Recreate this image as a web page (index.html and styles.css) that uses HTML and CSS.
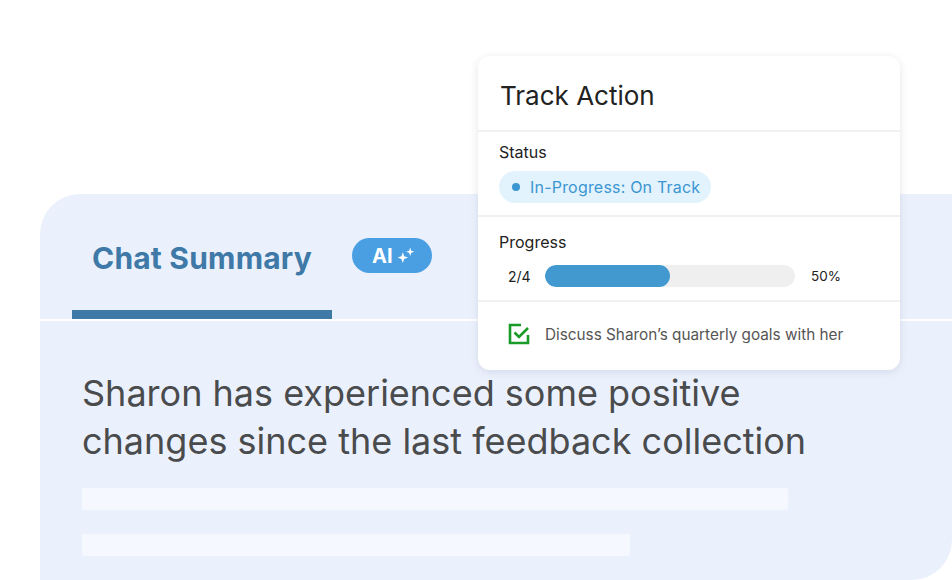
FILE: index.html
```html
<!DOCTYPE html>
<html>
<head>
    <title>Chat Summary</title>
    <link rel="stylesheet" href="styles.css">
</head>
<body>

<div class="panel">
    <div class="tabs">
        <div class="tab active">Chat Summary</div>
        <span class="ai-badge">AI
            <svg width="19" height="19" viewBox="0 0 18 18">
                <path d="M5.5 6 L6.8 9.7 L10.5 11 L6.8 12.3 L5.5 16 L4.2 12.3 L0.5 11 L4.2 9.7 Z" fill="#fff"/>
                <path d="M12.5 1.5 L13.5 4.5 L16.5 5.5 L13.5 6.5 L12.5 9.5 L11.5 6.5 L8.5 5.5 L11.5 4.5 Z" fill="#fff"/>
            </svg>
        </span>
    </div>

    <div class="summary">
        <p class="summary-text">Sharon has experienced some positive changes since the last feedback collection</p>
        <div class="skeleton long"></div>
        <div class="skeleton short"></div>
    </div>
</div>

<!-- Track action popover -->
<div class="card">
    <div class="card-header">Track Action</div>

    <div class="card-section">
        <div class="label">Status</div>
        <span class="status-pill"><span class="dot"></span>In-Progress: On Track</span>
    </div>

    <div class="card-section">
        <div class="label">Progress</div>
        <div class="progress-row">
            <span class="count">2/4</span>
            <div class="bar"><div class="bar-fill" style="width: 50%"></div></div>
            <span class="percent">50%</span>
        </div>
    </div>

    <div class="task">
        <svg width="22" height="22" viewBox="0 0 22 22" fill="none">
            <path d="M13 2H2v18h18v-8" stroke="#1a9b27" stroke-width="2.6"/>
            <path d="M6.5 9.5l4.5 4.5 9-9" stroke="#1a9b27" stroke-width="2.6"/>
        </svg>
        <span>Discuss Sharon’s quarterly goals with her</span>
    </div>
</div>

</body>
</html>
```

FILE: styles.css
```css
/* Page */
html, body {
    height: 580px;
    overflow: hidden;
}

body {
    margin: 0;
    padding: 194px 0 0 40px;
    font-family: 'Inter', sans-serif;
    background: #fff;
    box-sizing: border-box;
    position: relative;
}

/* Summary panel */
.panel {
    background: #ebf1fc;
    height: 386px;
    border-radius: 40px 0 40px 0;
}

.tabs {
    display: flex;
    align-items: center;
    height: 125px;
    padding-left: 32px;
    border-bottom: 2px solid #fff;
}

.tab {
    width: 260px;
    height: 125px;
    box-sizing: border-box;
    display: flex;
    align-items: center;
    justify-content: center;
    font-size: 30px;
    font-weight: 700;
    color: #3f79a7;
    letter-spacing: 0.2px;
}

.tab.active {
    border-bottom: 9px solid #3e79a7;
    padding-top: 12px;
}

.ai-badge {
    margin-left: 20px;
    margin-top: -2px;
    display: inline-flex;
    align-items: center;
    gap: 4px;
    height: 35px;
    padding: 0 16px 0 20px;
    background: #4a9fe3;
    color: #fff;
    font-size: 20px;
    font-weight: 700;
    border-radius: 18px;
}

.summary {
    padding: 48px 0 0 42px;
}

.summary-text {
    margin: 0;
    width: 760px;
    font-size: 36px;
    line-height: 48px;
    color: #4a4b4d;
}

.skeleton {
    height: 22px;
    background: #f5f8fe;
    border-radius: 2px;
}

.skeleton.long {
    width: 706px;
    margin-top: 23px;
}

.skeleton.short {
    width: 548px;
    margin-top: 24px;
}

/* Track action card */
.card {
    position: absolute;
    left: 478px;
    top: 56px;
    width: 422px;
    height: 314px;
    background: #fff;
    border-radius: 12px;
    box-shadow: 0 2px 8px rgba(40, 50, 90, 0.12);
    box-sizing: border-box;
}

.card-header {
    height: 76px;
    padding: 4px 22px 0;
    display: flex;
    align-items: center;
    font-size: 26px;
    color: #222;
    border-bottom: 2px solid #f1f1f1;
    box-sizing: border-box;
}

.card-section {
    padding: 10px 21px 0;
    height: 85px;
    border-bottom: 2px solid #f1f1f1;
    box-sizing: border-box;
}

.card-section + .card-section {
    padding-top: 15px;
}

.label {
    font-size: 16px;
    color: #222;
    line-height: 20px;
}

.status-pill {
    display: inline-flex;
    align-items: center;
    margin-top: 9px;
    height: 32px;
    padding: 0 11px 0 13px;
    background: #e2f3fd;
    border-radius: 16px;
    font-size: 16px;
    letter-spacing: 0.2px;
    color: #3b96d2;
}

.dot {
    width: 8px;
    height: 8px;
    border-radius: 50%;
    background: #3b96d2;
    margin-right: 10px;
}

.progress-row {
    display: flex;
    align-items: center;
    margin-top: 13px;
    padding-left: 9px;
    font-size: 14px;
    color: #222;
}

.count {
    width: 37px;
}

.bar {
    width: 250px;
    height: 22px;
    background: #efefef;
    border-radius: 11px;
    overflow: hidden;
}

.bar-fill {
    height: 100%;
    background: #4199cf;
    border-radius: 11px;
}

.percent {
    margin-left: 16px;
    font-size: 13.5px;
}

.task {
    display: flex;
    align-items: center;
    gap: 15px;
    padding: 0 30px;
    height: 64px;
    font-size: 15.3px;
    color: #555;
}
```
